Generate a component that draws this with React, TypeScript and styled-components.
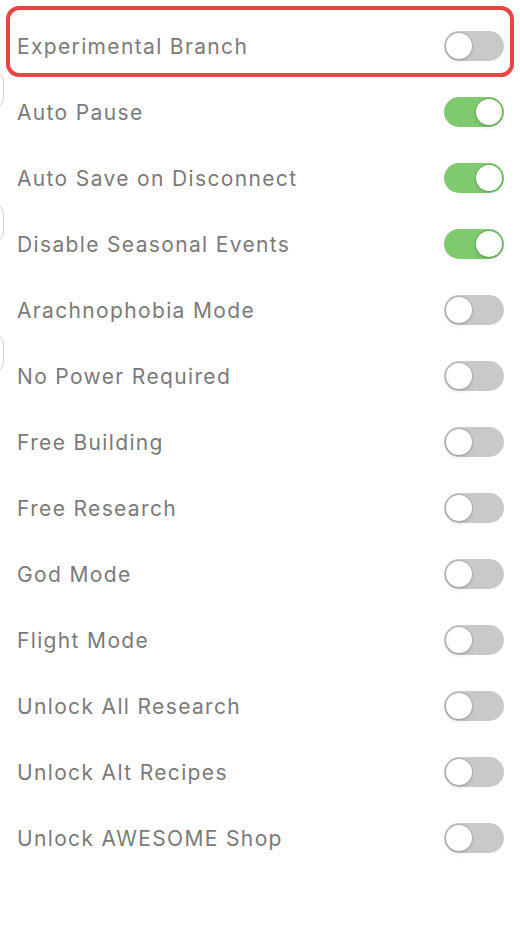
import React, { useState } from "react";
import styled, { createGlobalStyle, css } from "styled-components";

const Global = createGlobalStyle`
  html, body { margin: 0; padding: 0; background: #ffffff; }
  body { font-family: Inter, "Noto Sans", sans-serif; }
`;

const Page = styled.div`
  position: relative;
  width: 520px;
  height: 944px;
  overflow: hidden;
  background: #fff;
`;

const List = styled.div`
  display: flex;
  flex-direction: column;
  padding-top: 13px;
`;

const Row = styled.div<{ $highlight?: boolean }>`
  position: relative;
  display: flex;
  align-items: center;
  justify-content: space-between;
  height: 66px;
  padding: 0 16px 0 17px;
  box-sizing: border-box;
  ${(p) =>
    p.$highlight &&
    css`
      &::after {
        content: "";
        position: absolute;
        left: 6px;
        right: 6px;
        top: -7px;
        bottom: 2px;
        border: 4px solid #ea4545;
        border-radius: 13px;
        pointer-events: none;
      }
    `}
`;

const Label = styled.span`
  font-size: 21px;
  letter-spacing: 1.35px;
  color: #7a7a7a;
  font-weight: 400;
  line-height: 1;
`;

const Track = styled.button<{ $on: boolean }>`
  position: relative;
  width: 60px;
  height: 30px;
  border: none;
  padding: 0;
  border-radius: 15px;
  background: ${(p) => (p.$on ? "#7fc96f" : "#c9c9c9")};
  cursor: pointer;
  flex: none;
`;

const Knob = styled.span<{ $on: boolean }>`
  position: absolute;
  top: 2px;
  left: ${(p) => (p.$on ? "32px" : "2px")};
  width: 26px;
  height: 26px;
  border-radius: 50%;
  background: #fff;
  box-shadow: 0 0 0 1px rgba(0, 0, 0, 0.12), 0 3px 4px rgba(0, 0, 0, 0.1);
`;

const EdgeBox = styled.div<{ $top: number; $h: number }>`
  position: absolute;
  left: -100px;
  top: ${(p) => p.$top}px;
  width: 104px;
  height: ${(p) => p.$h}px;
  box-sizing: border-box;
  border: 1.5px solid #cfcfcf;
  border-radius: 10px;
`;

const items: [string, boolean][] = [
  ["Experimental Branch", false],
  ["Auto Pause", true],
  ["Auto Save on Disconnect", true],
  ["Disable Seasonal Events", true],
  ["Arachnophobia Mode", false],
  ["No Power Required", false],
  ["Free Building", false],
  ["Free Research", false],
  ["God Mode", false],
  ["Flight Mode", false],
  ["Unlock All Research", false],
  ["Unlock Alt Recipes", false],
  ["Unlock AWESOME Shop", false],
];

export default function App() {
  const [state, setState] = useState(items.map((i) => i[1]));
  return (
    <Page>
      <Global />
      <EdgeBox $top={71} $h={37} />
      <EdgeBox $top={204} $h={38} />
      <EdgeBox $top={334} $h={38} />
      <List>
        {items.map(([label], i) => (
          <Row key={label} $highlight={i === 0}>
            <Label>{label}</Label>
            <Track
              $on={state[i]}
              onClick={() => setState((s) => s.map((v, j) => (j === i ? !v : v)))}
            >
              <Knob $on={state[i]} />
            </Track>
          </Row>
        ))}
      </List>
    </Page>
  );
}
